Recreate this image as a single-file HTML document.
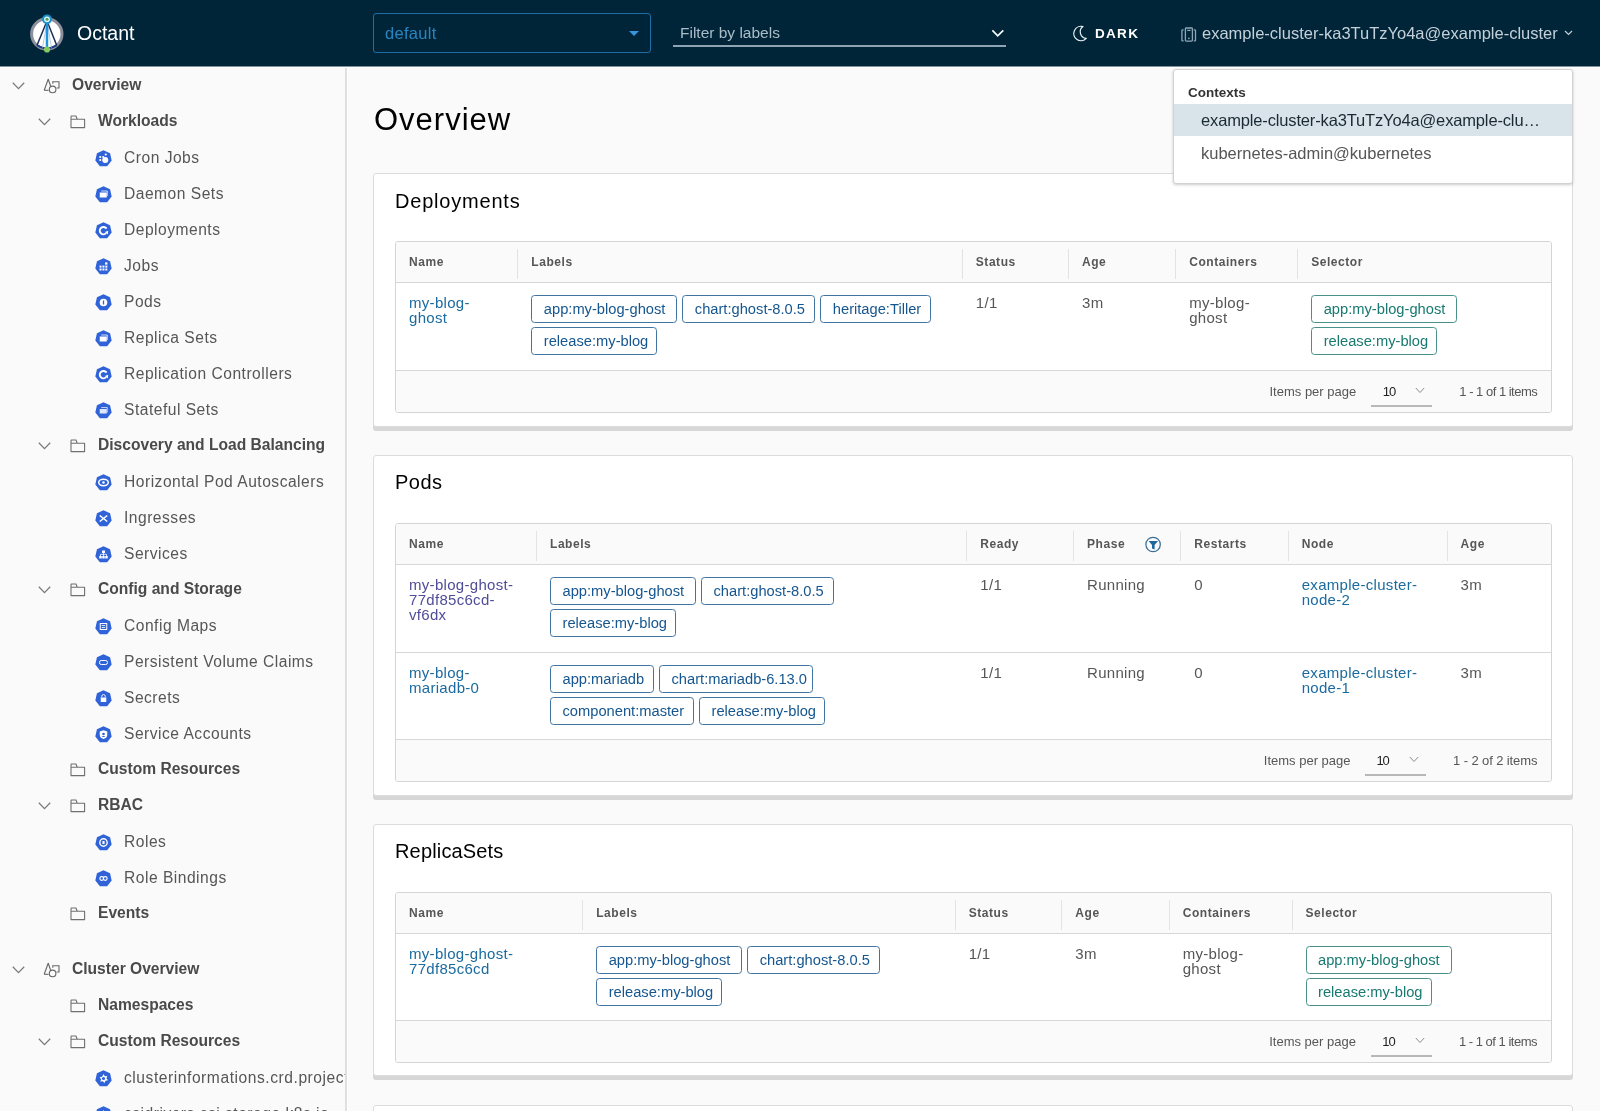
<!DOCTYPE html>
<html><head><meta charset="utf-8"><title>Octant</title>
<style>
*{box-sizing:border-box;margin:0;padding:0}
html,body{width:1600px;height:1111px;overflow:hidden;background:#fafafa;font-family:"Liberation Sans",sans-serif;color:#565656}
.abs{position:absolute}
.hdr{position:absolute;left:0;top:0;width:1600px;height:66px;background:#002538}
.hline{position:absolute;left:0;top:66px;width:1600px;height:2px;background:#fff;border-top:1px solid #7f929c}
.brand{position:absolute;left:77px;top:20px;font-size:19.5px;line-height:26px;color:#fff;letter-spacing:0}
.ns{position:absolute;left:373px;top:13px;width:278px;height:40px;border:1px solid #1c6ea6;border-radius:3px}
.ns span{position:absolute;left:11px;top:9px;font-size:16.5px;line-height:20px;color:#2985c2;letter-spacing:0.3px}
.ns i{position:absolute;left:254.5px;top:17px;width:0;height:0;border-left:5px solid transparent;border-right:5px solid transparent;border-top:5.5px solid #3596dc}
.flt{position:absolute;left:673px;top:45px;width:333px;height:2px;background:#8fa4b3}
.flt-t{position:absolute;left:680px;top:23px;font-size:15.5px;line-height:20px;color:#a9bcc8}
.dark{position:absolute;left:1095px;top:26px;font-size:13.5px;line-height:16px;color:#fff;font-weight:bold;letter-spacing:1.3px}
.ctx{position:absolute;left:1202px;top:23px;font-size:16.5px;line-height:20px;color:#c3d0d9;white-space:nowrap}
.side{position:absolute;left:0;top:0;width:345px;height:1111px;overflow:hidden}
.sbor{position:absolute;left:345px;top:68px;width:2px;height:1043px;background:#dfdfdf}
.sbor2{position:absolute;left:347px;top:68px;width:1px;height:1043px;background:#fff}
.nav{position:absolute;height:36px;line-height:36px;white-space:nowrap}
.nav.b{font-weight:bold;font-size:15.6px;color:#4a4a4a}
.nav.r{font-size:15.6px;letter-spacing:0.5px;color:#565656}
.chev{position:absolute}
.h1{position:absolute;left:374px;top:100.3px;font-size:31px;line-height:40px;color:#000;font-weight:normal;letter-spacing:1px}
.card{position:absolute;left:373px;width:1200px;background:#fff;border:1px solid #dcdcdc;border-radius:3px;box-shadow:0 4px 0 0 #d7d7d7}
.ctitle{position:absolute;left:21px;font-size:20px;line-height:28px;color:#000}
.grid{position:absolute;left:21px;width:1157px;border:1px solid #d4d4d4;border-radius:3px;background:#fff;overflow:hidden}
.ghead{position:absolute;left:0;top:0;width:100%;height:41px;background:#fafafa;border-bottom:1px solid #d7d7d7}
.th{position:absolute;top:0;height:40px;line-height:41px;font-weight:bold;font-size:12px;letter-spacing:0.55px;color:#565656;padding-left:14px;white-space:nowrap}
.sep{position:absolute;top:7px;width:1px;height:30px;background:#e3e3e3}
.row{position:absolute;left:0;width:100%;border-bottom:1px solid #d7d7d7}
.td{position:absolute;top:0;padding-left:14px;padding-top:11.5px;font-size:15px;line-height:15.4px;letter-spacing:0.3px;color:#565656}
.lnk{color:#1b6b9f}
.vis{color:#504d98}
.chips{position:absolute;top:13px;display:flex;flex-wrap:wrap;align-content:flex-start}
.chip{height:28px;border:1px solid #4274a2;border-radius:3.5px;color:#16568f;font-size:14.7px;line-height:27px;padding:0 0 0 11.5px;margin:0 5px 3.5px 0;white-space:nowrap;overflow:visible}
.chip.t{border-color:#48908a;color:#177970}
.foot{position:absolute;left:0;width:100%;height:41px;background:#fafafa}
.ipp{position:absolute;font-size:13px;line-height:16px;color:#565656;white-space:nowrap}
.sel10{position:absolute;font-size:13px;line-height:16px;color:#222}
.ul{position:absolute;height:2px;background:#b8b8b8}
.dd{position:absolute;left:1173px;top:69px;width:400px;height:114.5px;background:#fff;border:1px solid #d2d2d2;border-radius:3px;box-shadow:0 1px 3px rgba(0,0,0,0.2)}
#root{position:absolute;left:0;top:0;width:1600px;height:1111px;will-change:transform}
</style></head><body><div id="root">
<div class="hdr"></div>
<div class="hline"></div>
<svg class="abs" style="left:26px;top:10px" width="44" height="46" viewBox="26 10 44 46">
 <circle cx="46.8" cy="34" r="15.2" fill="#fff" stroke="#8d8f9a" stroke-width="3"/>
 <path d="M36.6 45.4 Q46.8 53 57 45.4 L56.4 44.8 Q46.8 50 37.2 44.8 Z" fill="#1d3f8c"/>
 <path d="M37 45.3 Q46.8 51.5 56.7 45.3" fill="none" stroke="#1d3f8c" stroke-width="1.8"/>
 <line x1="47" y1="21" x2="37" y2="45.3" stroke="#1a2f55" stroke-width="1.5"/>
 <line x1="47" y1="21" x2="56.7" y2="45.3" stroke="#1a2f55" stroke-width="1.5"/>
 <line x1="47" y1="21" x2="42.5" y2="48" stroke="#8fa8c8" stroke-width="0.6"/>
 <line x1="47" y1="21" x2="51.5" y2="48" stroke="#8fa8c8" stroke-width="0.6"/>
 <line x1="47" y1="20" x2="47" y2="48.5" stroke="#1f94d8" stroke-width="2.5"/>
 <circle cx="47" cy="19.3" r="4.9" fill="#1e8fc7"/>
 <circle cx="47" cy="19.3" r="2.9" fill="#dff6fb"/>
 <circle cx="47" cy="19.3" r="1.5" fill="#4aa35a"/>
 <circle cx="47" cy="49.5" r="3.1" fill="#86c95e"/>
</svg>
<div class="brand">Octant</div>
<div class="ns"><span>default</span><i></i></div>
<div class="flt-t">Filter by labels</div>
<div class="flt"></div>
<svg class="abs" style="left:990px;top:28px" width="15" height="10" viewBox="0 0 15 10"><path d="M2.4 2.4 L7.7 7.8 L13.3 2.4" fill="none" stroke="#f4f8fa" stroke-width="1.8"/></svg>
<svg class="abs" style="left:1068px;top:20px" width="24" height="26" viewBox="0 0 24 26"><path d="M15 6.6 A7.2 7.2 0 1 0 18.3 18.4 A6.5 6.5 0 0 1 15 6.6 Z" fill="none" stroke="#e9f1f5" stroke-width="1.25" stroke-linejoin="round"/></svg>
<div class="dark">DARK</div>
<svg class="abs" style="left:1176px;top:22px" width="24" height="24" viewBox="0 0 24 24"><g fill="none" stroke="#8ea6b6" stroke-width="1.3"><path d="M7.6 7.8 H6.6 Q5.9 7.8 5.9 8.5 V18.2 Q5.9 18.9 6.6 18.9 H7.6"/><path d="M17.8 7.8 H18.8 Q19.5 7.8 19.5 8.5 V18.2 Q19.5 18.9 18.8 18.9 H17.8"/><rect x="9.4" y="6" width="7" height="13.1" rx="0.8"/><path d="M11.2 8.4 H14.6"/></g><circle cx="12.9" cy="16.3" r="0.9" fill="#8ea6b6"/></svg>
<div class="ctx">example-cluster-ka3TuTzYo4a@example-cluster</div>
<svg class="abs" style="left:1564px;top:30px" width="9" height="6" viewBox="0 0 9 6"><path d="M1 1 L4.5 4.5 L8 1" fill="none" stroke="#c3d0d9" stroke-width="1.2"/></svg>
<div class="side">
<svg class="abs" style="left:12px;top:82px" width="13" height="8" viewBox="0 0 13 8"><path d="M0.8 0.8 L6.5 6.6 L12.2 0.8" fill="none" stroke="#7a7a7a" stroke-width="1.3"/></svg>
<svg class="abs" style="left:43px;top:78px" width="18" height="16" viewBox="0 0 18 16"><path d="M1.2 12.3 L5.2 1.2 L7.6 8" fill="none" stroke="#666" stroke-width="1.1" stroke-linejoin="round"/><path d="M1.2 12.3 H5.5" stroke="#666" stroke-width="1.1"/><path d="M9.8 5.8 V3.8 H16 V10 H13.6" fill="none" stroke="#666" stroke-width="1.1"/><circle cx="9.6" cy="11.4" r="3.3" fill="none" stroke="#666" stroke-width="1.1"/></svg>
<div class="nav b" style="left:72px;top:67px">Overview</div>
<svg class="abs" style="left:38px;top:118px" width="13" height="8" viewBox="0 0 13 8"><path d="M0.8 0.8 L6.5 6.6 L12.2 0.8" fill="none" stroke="#7a7a7a" stroke-width="1.3"/></svg>
<svg class="abs" style="left:70px;top:115px" width="16" height="14" viewBox="0 0 16 14"><path d="M1 2.2 V12.6 H14.6 V4.2 H7.2 L6 1 H1.2 Z M1 4.2 H7.2" fill="none" stroke="#6f6f6f" stroke-width="1.1" stroke-linejoin="round"/></svg>
<div class="nav b" style="left:98px;top:103px">Workloads</div>
<svg class="abs" style="left:95px;top:150px" width="17" height="17" viewBox="0 0 16.5 17"><polygon points="8.25,0.20 14.82,3.36 16.44,10.47 11.89,16.17 4.61,16.17 0.06,10.47 1.68,3.36" fill="#3163d8"/><circle cx="10" cy="10" r="3" fill="#fff"/><circle cx="5" cy="7" r="1.1" fill="#fff"/><circle cx="5" cy="10" r="1.1" fill="#fff"/><circle cx="8" cy="7" r="1.1" fill="#fff"/><circle cx="10.5" cy="4.5" r="1.1" fill="#fff"/></svg>
<div class="nav r" style="left:124px;top:139.5px">Cron Jobs</div>
<svg class="abs" style="left:95px;top:186px" width="17" height="17" viewBox="0 0 16.5 17"><polygon points="8.25,0.20 14.82,3.36 16.44,10.47 11.89,16.17 4.61,16.17 0.06,10.47 1.68,3.36" fill="#3163d8"/><rect x="4.5" y="6.5" width="7" height="5" fill="#fff"/><path d="M6 5 h6 v5" fill="none" stroke="#fff" stroke-width="0.8"/></svg>
<div class="nav r" style="left:124px;top:175.5px">Daemon Sets</div>
<svg class="abs" style="left:95px;top:222px" width="17" height="17" viewBox="0 0 16.5 17"><polygon points="8.25,0.20 14.82,3.36 16.44,10.47 11.89,16.17 4.61,16.17 0.06,10.47 1.68,3.36" fill="#3163d8"/><path d="M10.9 11.2 A3.7 3.7 0 1 1 11.3 6.6" fill="none" stroke="#fff" stroke-width="1.9"/><path d="M9.6 10 L12.6 12.4 L12.9 8.8 Z" fill="#fff"/></svg>
<div class="nav r" style="left:124px;top:211.5px">Deployments</div>
<svg class="abs" style="left:95px;top:258px" width="17" height="17" viewBox="0 0 16.5 17"><polygon points="8.25,0.20 14.82,3.36 16.44,10.47 11.89,16.17 4.61,16.17 0.06,10.47 1.68,3.36" fill="#3163d8"/><g fill="#fff"><rect x="4.3" y="7.6" width="2" height="2"/><rect x="7.2" y="7.6" width="2" height="2"/><rect x="10.1" y="7.6" width="2" height="2"/><rect x="4.3" y="10.5" width="2" height="2"/><rect x="7.2" y="10.5" width="2" height="2"/><rect x="10.1" y="10.5" width="2" height="2"/><rect x="9.8" y="4.4" width="2.4" height="2.2"/></g></svg>
<div class="nav r" style="left:124px;top:247.5px">Jobs</div>
<svg class="abs" style="left:95px;top:294px" width="17" height="17" viewBox="0 0 16.5 17"><polygon points="8.25,0.20 14.82,3.36 16.44,10.47 11.89,16.17 4.61,16.17 0.06,10.47 1.68,3.36" fill="#3163d8"/><circle cx="8.25" cy="8.5" r="3.8" fill="#fff"/><rect x="7.6" y="6.5" width="1.3" height="4" fill="#3163d8"/></svg>
<div class="nav r" style="left:124px;top:283.5px">Pods</div>
<svg class="abs" style="left:95px;top:330px" width="17" height="17" viewBox="0 0 16.5 17"><polygon points="8.25,0.20 14.82,3.36 16.44,10.47 11.89,16.17 4.61,16.17 0.06,10.47 1.68,3.36" fill="#3163d8"/><rect x="4.5" y="6.5" width="7" height="5" fill="#fff"/><path d="M6 5 h6 v5" fill="none" stroke="#fff" stroke-width="0.8"/></svg>
<div class="nav r" style="left:124px;top:319.5px">Replica Sets</div>
<svg class="abs" style="left:95px;top:366px" width="17" height="17" viewBox="0 0 16.5 17"><polygon points="8.25,0.20 14.82,3.36 16.44,10.47 11.89,16.17 4.61,16.17 0.06,10.47 1.68,3.36" fill="#3163d8"/><path d="M10.9 11.2 A3.7 3.7 0 1 1 11.3 6.6" fill="none" stroke="#fff" stroke-width="1.9"/><path d="M9.6 10 L12.6 12.4 L12.9 8.8 Z" fill="#fff"/></svg>
<div class="nav r" style="left:124px;top:355.5px">Replication Controllers</div>
<svg class="abs" style="left:95px;top:402px" width="17" height="17" viewBox="0 0 16.5 17"><polygon points="8.25,0.20 14.82,3.36 16.44,10.47 11.89,16.17 4.61,16.17 0.06,10.47 1.68,3.36" fill="#3163d8"/><rect x="4.5" y="7" width="7" height="4.5" fill="#dfe8fb"/><path d="M6 5.5 h6 v5" fill="none" stroke="#dfe8fb" stroke-width="0.8"/></svg>
<div class="nav r" style="left:124px;top:391.5px">Stateful Sets</div>
<svg class="abs" style="left:38px;top:442px" width="13" height="8" viewBox="0 0 13 8"><path d="M0.8 0.8 L6.5 6.6 L12.2 0.8" fill="none" stroke="#7a7a7a" stroke-width="1.3"/></svg>
<svg class="abs" style="left:70px;top:439px" width="16" height="14" viewBox="0 0 16 14"><path d="M1 2.2 V12.6 H14.6 V4.2 H7.2 L6 1 H1.2 Z M1 4.2 H7.2" fill="none" stroke="#6f6f6f" stroke-width="1.1" stroke-linejoin="round"/></svg>
<div class="nav b" style="left:98px;top:427px">Discovery and Load Balancing</div>
<svg class="abs" style="left:95px;top:474px" width="17" height="17" viewBox="0 0 16.5 17"><polygon points="8.25,0.20 14.82,3.36 16.44,10.47 11.89,16.17 4.61,16.17 0.06,10.47 1.68,3.36" fill="#3163d8"/><ellipse cx="8.25" cy="8.5" rx="4.8" ry="3.2" fill="none" stroke="#fff" stroke-width="1.5"/><circle cx="8.25" cy="8.5" r="1.2" fill="#fff"/></svg>
<div class="nav r" style="left:124px;top:463.5px">Horizontal Pod Autoscalers</div>
<svg class="abs" style="left:95px;top:510px" width="17" height="17" viewBox="0 0 16.5 17"><polygon points="8.25,0.20 14.82,3.36 16.44,10.47 11.89,16.17 4.61,16.17 0.06,10.47 1.68,3.36" fill="#3163d8"/><path d="M4.5 5.5 L12 11.5 M4.5 11.5 L12 5.5" stroke="#fff" stroke-width="1.6"/></svg>
<div class="nav r" style="left:124px;top:499.5px">Ingresses</div>
<svg class="abs" style="left:95px;top:546px" width="17" height="17" viewBox="0 0 16.5 17"><polygon points="8.25,0.20 14.82,3.36 16.44,10.47 11.89,16.17 4.61,16.17 0.06,10.47 1.68,3.36" fill="#3163d8"/><g fill="#fff"><rect x="6.8" y="4.5" width="3" height="2.5"/><rect x="4" y="10" width="2.5" height="2.5"/><rect x="7" y="10" width="2.5" height="2.5"/><rect x="10" y="10" width="2.5" height="2.5"/></g><path d="M5.2 10 V8.3 H11.3 V10 M8.25 7 V10" fill="none" stroke="#fff" stroke-width="0.8"/></svg>
<div class="nav r" style="left:124px;top:535.5px">Services</div>
<svg class="abs" style="left:38px;top:586px" width="13" height="8" viewBox="0 0 13 8"><path d="M0.8 0.8 L6.5 6.6 L12.2 0.8" fill="none" stroke="#7a7a7a" stroke-width="1.3"/></svg>
<svg class="abs" style="left:70px;top:583px" width="16" height="14" viewBox="0 0 16 14"><path d="M1 2.2 V12.6 H14.6 V4.2 H7.2 L6 1 H1.2 Z M1 4.2 H7.2" fill="none" stroke="#6f6f6f" stroke-width="1.1" stroke-linejoin="round"/></svg>
<div class="nav b" style="left:98px;top:571px">Config and Storage</div>
<svg class="abs" style="left:95px;top:618px" width="17" height="17" viewBox="0 0 16.5 17"><polygon points="8.25,0.20 14.82,3.36 16.44,10.47 11.89,16.17 4.61,16.17 0.06,10.47 1.68,3.36" fill="#3163d8"/><rect x="5" y="5.5" width="6.5" height="6" fill="none" stroke="#fff" stroke-width="1"/><path d="M6.5 7.5h3.5M6.5 9.5h3.5" stroke="#fff" stroke-width="0.8"/></svg>
<div class="nav r" style="left:124px;top:607.5px">Config Maps</div>
<svg class="abs" style="left:95px;top:654px" width="17" height="17" viewBox="0 0 16.5 17"><polygon points="8.25,0.20 14.82,3.36 16.44,10.47 11.89,16.17 4.61,16.17 0.06,10.47 1.68,3.36" fill="#3163d8"/><rect x="4.2" y="6.5" width="8" height="4" rx="1.8" fill="none" stroke="#fff" stroke-width="1"/></svg>
<div class="nav r" style="left:124px;top:643.5px">Persistent Volume Claims</div>
<svg class="abs" style="left:95px;top:690px" width="17" height="17" viewBox="0 0 16.5 17"><polygon points="8.25,0.20 14.82,3.36 16.44,10.47 11.89,16.17 4.61,16.17 0.06,10.47 1.68,3.36" fill="#3163d8"/><rect x="5.5" y="7.5" width="5.5" height="4.5" fill="#fff"/><path d="M6.5 7.5 v-1.2 a1.75 1.75 0 0 1 3.5 0 v1.2" fill="none" stroke="#fff" stroke-width="0.9"/></svg>
<div class="nav r" style="left:124px;top:679.5px">Secrets</div>
<svg class="abs" style="left:95px;top:726px" width="17" height="17" viewBox="0 0 16.5 17"><polygon points="8.25,0.20 14.82,3.36 16.44,10.47 11.89,16.17 4.61,16.17 0.06,10.47 1.68,3.36" fill="#3163d8"/><path d="M8.25 4.2 L12 5.6 V9 Q12 11.8 8.25 13 Q4.5 11.8 4.5 9 V5.6 Z" fill="#fff"/><circle cx="8.25" cy="8" r="1.3" fill="#3163d8"/><path d="M6.3 11 Q8.25 9 10.2 11" fill="#3163d8"/></svg>
<div class="nav r" style="left:124px;top:715.5px">Service Accounts</div>
<svg class="abs" style="left:70px;top:763px" width="16" height="14" viewBox="0 0 16 14"><path d="M1 2.2 V12.6 H14.6 V4.2 H7.2 L6 1 H1.2 Z M1 4.2 H7.2" fill="none" stroke="#6f6f6f" stroke-width="1.1" stroke-linejoin="round"/></svg>
<div class="nav b" style="left:98px;top:751px">Custom Resources</div>
<svg class="abs" style="left:38px;top:802px" width="13" height="8" viewBox="0 0 13 8"><path d="M0.8 0.8 L6.5 6.6 L12.2 0.8" fill="none" stroke="#7a7a7a" stroke-width="1.3"/></svg>
<svg class="abs" style="left:70px;top:799px" width="16" height="14" viewBox="0 0 16 14"><path d="M1 2.2 V12.6 H14.6 V4.2 H7.2 L6 1 H1.2 Z M1 4.2 H7.2" fill="none" stroke="#6f6f6f" stroke-width="1.1" stroke-linejoin="round"/></svg>
<div class="nav b" style="left:98px;top:787px">RBAC</div>
<svg class="abs" style="left:95px;top:834px" width="17" height="17" viewBox="0 0 16.5 17"><polygon points="8.25,0.20 14.82,3.36 16.44,10.47 11.89,16.17 4.61,16.17 0.06,10.47 1.68,3.36" fill="#3163d8"/><circle cx="8.25" cy="8.5" r="3.7" fill="none" stroke="#fff" stroke-width="1.4"/><rect x="7.2" y="7" width="2.1" height="3" fill="#fff"/></svg>
<div class="nav r" style="left:124px;top:823.5px">Roles</div>
<svg class="abs" style="left:95px;top:870px" width="17" height="17" viewBox="0 0 16.5 17"><polygon points="8.25,0.20 14.82,3.36 16.44,10.47 11.89,16.17 4.61,16.17 0.06,10.47 1.68,3.36" fill="#3163d8"/><circle cx="6.5" cy="8.5" r="1.9" fill="none" stroke="#fff" stroke-width="1.1"/><circle cx="10" cy="8.5" r="1.9" fill="none" stroke="#fff" stroke-width="1.1"/></svg>
<div class="nav r" style="left:124px;top:859.5px">Role Bindings</div>
<svg class="abs" style="left:70px;top:907px" width="16" height="14" viewBox="0 0 16 14"><path d="M1 2.2 V12.6 H14.6 V4.2 H7.2 L6 1 H1.2 Z M1 4.2 H7.2" fill="none" stroke="#6f6f6f" stroke-width="1.1" stroke-linejoin="round"/></svg>
<div class="nav b" style="left:98px;top:895px">Events</div>
<svg class="abs" style="left:12px;top:966px" width="13" height="8" viewBox="0 0 13 8"><path d="M0.8 0.8 L6.5 6.6 L12.2 0.8" fill="none" stroke="#7a7a7a" stroke-width="1.3"/></svg>
<svg class="abs" style="left:43px;top:962px" width="18" height="16" viewBox="0 0 18 16"><path d="M1.2 12.3 L5.2 1.2 L7.6 8" fill="none" stroke="#666" stroke-width="1.1" stroke-linejoin="round"/><path d="M1.2 12.3 H5.5" stroke="#666" stroke-width="1.1"/><path d="M9.8 5.8 V3.8 H16 V10 H13.6" fill="none" stroke="#666" stroke-width="1.1"/><circle cx="9.6" cy="11.4" r="3.3" fill="none" stroke="#666" stroke-width="1.1"/></svg>
<div class="nav b" style="left:72px;top:951px">Cluster Overview</div>
<svg class="abs" style="left:70px;top:999px" width="16" height="14" viewBox="0 0 16 14"><path d="M1 2.2 V12.6 H14.6 V4.2 H7.2 L6 1 H1.2 Z M1 4.2 H7.2" fill="none" stroke="#6f6f6f" stroke-width="1.1" stroke-linejoin="round"/></svg>
<div class="nav b" style="left:98px;top:987px">Namespaces</div>
<svg class="abs" style="left:38px;top:1038px" width="13" height="8" viewBox="0 0 13 8"><path d="M0.8 0.8 L6.5 6.6 L12.2 0.8" fill="none" stroke="#7a7a7a" stroke-width="1.3"/></svg>
<svg class="abs" style="left:70px;top:1035px" width="16" height="14" viewBox="0 0 16 14"><path d="M1 2.2 V12.6 H14.6 V4.2 H7.2 L6 1 H1.2 Z M1 4.2 H7.2" fill="none" stroke="#6f6f6f" stroke-width="1.1" stroke-linejoin="round"/></svg>
<div class="nav b" style="left:98px;top:1023px">Custom Resources</div>
<svg class="abs" style="left:95px;top:1070px" width="17" height="17" viewBox="0 0 16.5 17"><polygon points="8.25,0.20 14.82,3.36 16.44,10.47 11.89,16.17 4.61,16.17 0.06,10.47 1.68,3.36" fill="#3163d8"/><path d="M8.25 4 l1.3 2.3 2.5 -0.4 -0.9 2.4 1.6 2 -2.5 0.4 -1 2.4 -1.7 -1.9 -2.5 0.4 0.9 -2.4 -1.6 -2 2.5 -0.4 Z" fill="#fff"/><circle cx="8.25" cy="8.5" r="1.6" fill="#3163d8"/></svg>
<div class="nav r" style="left:124px;top:1059.5px;letter-spacing:0.55px">clusterinformations.crd.projectcalico.org</div>
<svg class="abs" style="left:95px;top:1106px" width="17" height="17" viewBox="0 0 16.5 17"><polygon points="8.25,0.20 14.82,3.36 16.44,10.47 11.89,16.17 4.61,16.17 0.06,10.47 1.68,3.36" fill="#3163d8"/><path d="M8.25 4 l1.3 2.3 2.5 -0.4 -0.9 2.4 1.6 2 -2.5 0.4 -1 2.4 -1.7 -1.9 -2.5 0.4 0.9 -2.4 -1.6 -2 2.5 -0.4 Z" fill="#fff"/><circle cx="8.25" cy="8.5" r="1.6" fill="#3163d8"/></svg>
<div class="nav r" style="left:124px;top:1095.5px">csidrivers.csi.storage.k8s.io</div>
</div>
<div class="sbor"></div><div class="sbor2"></div>
<div class="h1">Overview</div>
<div class="card" style="top:173px;height:254px">
<div class="ctitle" style="top:13px;letter-spacing:0.8px">Deployments</div>
<div class="grid" style="top:67px;height:172px">
<div class="ghead">
<div class="th" style="left:-1.0px">Name</div>
<div class="th" style="left:121.3px">Labels</div>
<div class="sep" style="left:121.3px"></div>
<div class="th" style="left:565.8px">Status</div>
<div class="sep" style="left:565.8px"></div>
<div class="th" style="left:672.0px">Age</div>
<div class="sep" style="left:672.0px"></div>
<div class="th" style="left:779.2px">Containers</div>
<div class="sep" style="left:779.2px"></div>
<div class="th" style="left:901.2px">Selector</div>
<div class="sep" style="left:901.2px"></div>
</div>
<div class="row" style="top:41px;height:88px">
<div class="td" style="left:-1.0px;width:122px"><span class="lnk">my-blog-<br>ghost</span></div>
<div class="chips" style="left:121.3px;width:444px;padding-left:14px;top:12px"><div class="chip" style="width:146px">app:my-blog-ghost</div><div class="chip" style="width:133px">chart:ghost-8.0.5</div><div class="chip" style="width:111px">heritage:Tiller</div><div class="chip" style="width:126px">release:my-blog</div></div>
<div class="td" style="left:565.8px;width:106px">1/1</div>
<div class="td" style="left:672.0px;width:107px">3m</div>
<div class="td" style="left:779.2px;width:122px">my-blog-<br>ghost</div>
<div class="chips" style="left:901.2px;width:253px;padding-left:14px;top:12px"><div class="chip t" style="width:146px">app:my-blog-ghost</div><div class="chip t" style="width:126px">release:my-blog</div></div>
</div>
<div class="foot" style="top:129px">
<div class="ipp" style="left:873.5px;top:13px">Items per page</div>
<div class="sel10" style="left:986.8px;top:13px;letter-spacing:-1px">10</div>
<svg style="position:absolute;left:1019.0px;top:16px" width="10" height="7" viewBox="0 0 10 7"><path d="M0.8 1 L5 5.5 L9.2 1" fill="none" stroke="#8a8a8a" stroke-width="1"/></svg>
<div class="ul" style="left:975.0px;width:60.7px;top:34px"></div>
<div class="ipp" style="left:1063.3px;top:13px;letter-spacing:-0.5px">1 - 1 of 1 items</div>
</div>
</div>
</div>
<div class="card" style="top:455px;height:341px">
<div class="ctitle" style="top:12px;letter-spacing:0.5px">Pods</div>
<div class="grid" style="top:67px;height:259px">
<div class="ghead">
<div class="th" style="left:-1.0px">Name</div>
<div class="th" style="left:140.0px">Labels</div>
<div class="sep" style="left:140.0px"></div>
<div class="th" style="left:570.3px">Ready</div>
<div class="sep" style="left:570.3px"></div>
<div class="th" style="left:677.0px">Phase<svg style="position:absolute;left:72px;top:12px" width="17" height="17" viewBox="0 0 17 17"><circle cx="8.1" cy="8.5" r="7.2" fill="none" stroke="#3b6d93" stroke-width="1.25"/><path d="M3.6 4.9 H13 L9.6 9 V13.4 L7 12.6 V9 Z" fill="#1d689f"/></svg></div>
<div class="sep" style="left:677.0px"></div>
<div class="th" style="left:784.3px">Restarts</div>
<div class="sep" style="left:784.3px"></div>
<div class="th" style="left:891.7px">Node</div>
<div class="sep" style="left:891.7px"></div>
<div class="th" style="left:1050.6px">Age</div>
<div class="sep" style="left:1050.6px"></div>
</div>
<div class="row" style="top:41px;height:88px">
<div class="td" style="left:-1.0px;width:141px"><span class="vis">my-blog-ghost-<br>77df85c6cd-<br>vf6dx</span></div>
<div class="chips" style="left:140.0px;width:430px;padding-left:14px;top:12px"><div class="chip" style="width:146px">app:my-blog-ghost</div><div class="chip" style="width:133px">chart:ghost-8.0.5</div><div class="chip" style="width:126px">release:my-blog</div></div>
<div class="td" style="left:570.3px;width:106px">1/1</div>
<div class="td" style="left:677.0px;width:107px">Running</div>
<div class="td" style="left:784.3px;width:107px">0</div>
<div class="td" style="left:891.7px;width:158px"><span class="lnk">example-cluster-<br>node-2</span></div>
<div class="td" style="left:1050.6px;width:104px">3m</div>
</div>
<div class="row" style="top:129px;height:87px">
<div class="td" style="left:-1.0px;width:141px"><span class="lnk">my-blog-<br>mariadb-0</span></div>
<div class="chips" style="left:140.0px;width:430px;padding-left:14px;top:12px"><div class="chip" style="width:104px">app:mariadb</div><div class="chip" style="width:154px">chart:mariadb-6.13.0</div><div class="chip" style="width:144px">component:master</div><div class="chip" style="width:126px">release:my-blog</div></div>
<div class="td" style="left:570.3px;width:106px">1/1</div>
<div class="td" style="left:677.0px;width:107px">Running</div>
<div class="td" style="left:784.3px;width:107px">0</div>
<div class="td" style="left:891.7px;width:158px"><span class="lnk">example-cluster-<br>node-1</span></div>
<div class="td" style="left:1050.6px;width:104px">3m</div>
</div>
<div class="foot" style="top:216px">
<div class="ipp" style="left:867.8px;top:13px">Items per page</div>
<div class="sel10" style="left:980.4px;top:13px;letter-spacing:-1px">10</div>
<svg style="position:absolute;left:1013.4px;top:16px" width="10" height="7" viewBox="0 0 10 7"><path d="M0.8 1 L5 5.5 L9.2 1" fill="none" stroke="#8a8a8a" stroke-width="1"/></svg>
<div class="ul" style="left:969.4px;width:61.0px;top:34px"></div>
<div class="ipp" style="left:1057.0px;top:13px;letter-spacing:-0.1px">1 - 2 of 2 items</div>
</div>
</div>
</div>
<div class="card" style="top:824px;height:252px">
<div class="ctitle" style="top:12px;letter-spacing:0.16px">ReplicaSets</div>
<div class="grid" style="top:67px;height:171px">
<div class="ghead">
<div class="th" style="left:-1.0px">Name</div>
<div class="th" style="left:186.2px">Labels</div>
<div class="sep" style="left:186.2px"></div>
<div class="th" style="left:558.7px">Status</div>
<div class="sep" style="left:558.7px"></div>
<div class="th" style="left:665.3px">Age</div>
<div class="sep" style="left:665.3px"></div>
<div class="th" style="left:772.7px">Containers</div>
<div class="sep" style="left:772.7px"></div>
<div class="th" style="left:895.5px">Selector</div>
<div class="sep" style="left:895.5px"></div>
</div>
<div class="row" style="top:41px;height:87px">
<div class="td" style="left:-1.0px;width:187px"><span class="lnk">my-blog-ghost-<br>77df85c6cd</span></div>
<div class="chips" style="left:186.2px;width:372px;padding-left:14px;top:12px"><div class="chip" style="width:146px">app:my-blog-ghost</div><div class="chip" style="width:133px">chart:ghost-8.0.5</div><div class="chip" style="width:126px">release:my-blog</div></div>
<div class="td" style="left:558.7px;width:106px">1/1</div>
<div class="td" style="left:665.3px;width:107px">3m</div>
<div class="td" style="left:772.7px;width:122px">my-blog-<br>ghost</div>
<div class="chips" style="left:895.5px;width:259px;padding-left:14px;top:12px"><div class="chip t" style="width:146px">app:my-blog-ghost</div><div class="chip t" style="width:126px">release:my-blog</div></div>
</div>
<div class="foot" style="top:128px">
<div class="ipp" style="left:873.2px;top:13px">Items per page</div>
<div class="sel10" style="left:986.2px;top:13px;letter-spacing:-1px">10</div>
<svg style="position:absolute;left:1019.0px;top:16px" width="10" height="7" viewBox="0 0 10 7"><path d="M0.8 1 L5 5.5 L9.2 1" fill="none" stroke="#8a8a8a" stroke-width="1"/></svg>
<div class="ul" style="left:975.0px;width:60.7px;top:34px"></div>
<div class="ipp" style="left:1063.0px;top:13px;letter-spacing:-0.5px">1 - 1 of 1 items</div>
</div>
</div>
</div>
<div class="card" style="top:1105px;height:200px"></div>
<div class="dd">
<div class="abs" style="left:14px;top:15px;font-size:13.5px;line-height:16px;font-weight:bold;color:#333">Contexts</div>
<div class="abs" style="left:0;top:33.5px;width:398px;height:32.5px;background:#d9e4ea"></div>
<div class="abs" style="left:27px;top:40px;font-size:16.5px;line-height:20px;color:#1b2a32;white-space:nowrap;letter-spacing:-0.15px">example-cluster-ka3TuTzYo4a@example-clu…</div>
<div class="abs" style="left:27px;top:73px;font-size:16.5px;line-height:20px;color:#565656;white-space:nowrap">kubernetes-admin@kubernetes</div>
</div>
</div></body></html>
